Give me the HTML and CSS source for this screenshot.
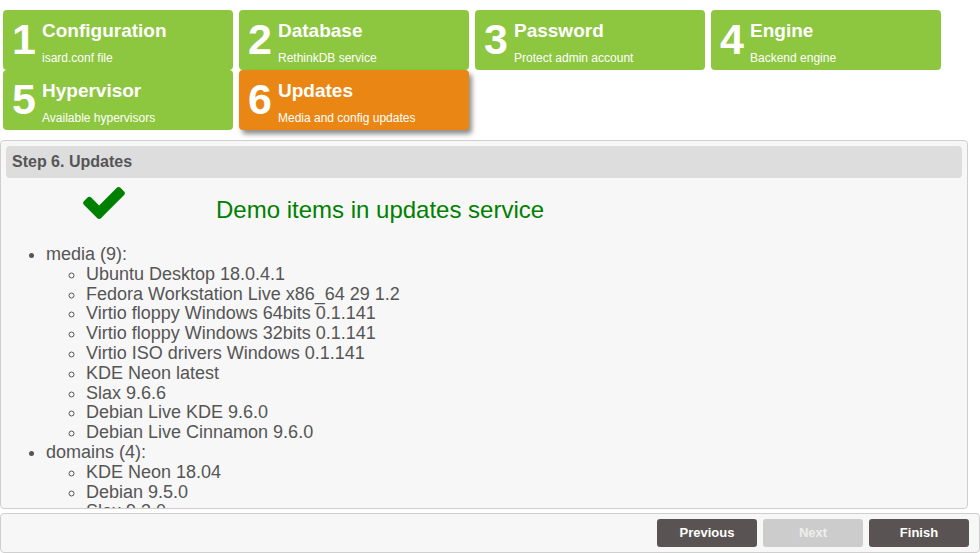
FILE: index.html
```html
<!DOCTYPE html>
<html>
<head>
<meta charset="utf-8">
<link rel="stylesheet" href="styles.css">
</head>
<body>
<div class="steps">
  <div class="step"><span class="num">1</span><div class="txt"><div class="title">Configuration</div><div class="sub">isard.conf file</div></div></div>
  <div class="step"><span class="num">2</span><div class="txt"><div class="title">Database</div><div class="sub">RethinkDB service</div></div></div>
  <div class="step"><span class="num">3</span><div class="txt"><div class="title">Password</div><div class="sub">Protect admin account</div></div></div>
  <div class="step"><span class="num">4</span><div class="txt"><div class="title">Engine</div><div class="sub">Backend engine</div></div></div>
  <div class="step"><span class="num">5</span><div class="txt"><div class="title">Hypervisor</div><div class="sub">Available hypervisors</div></div></div>
  <div class="step active"><span class="num">6</span><div class="txt"><div class="title">Updates</div><div class="sub">Media and config updates</div></div></div>
</div>

<div class="panel">
  <div class="panel-head">Step 6. Updates</div>
  <div class="result">
    <svg class="check" viewBox="121 334 1550 1188" width="42" height="32"><path fill="#008000" d="M1671 566q0 40-28 68l-724 724-136 136q-28 28-68 28t-68-28l-136-136-362-362q-28-28-28-68t28-68l136-136q28-28 68-28t68 28l294 295 656-657q28-28 68-28t68 28l136 136q28 28 28 68z"/></svg>
    <div class="msg">Demo items in updates service</div>
  </div>
  <ul class="items">
    <li>media (9):
      <ul>
        <li>Ubuntu Desktop 18.0.4.1</li>
        <li>Fedora Workstation Live x86_64 29 1.2</li>
        <li>Virtio floppy Windows 64bits 0.1.141</li>
        <li>Virtio floppy Windows 32bits 0.1.141</li>
        <li>Virtio ISO drivers Windows 0.1.141</li>
        <li>KDE Neon latest</li>
        <li>Slax 9.6.6</li>
        <li>Debian Live KDE 9.6.0</li>
        <li>Debian Live Cinnamon 9.6.0</li>
      </ul>
    </li>
    <li>domains (4):
      <ul>
        <li>KDE Neon 18.04</li>
        <li>Debian 9.5.0</li>
        <li>Slax 9.3.0</li>
        <li>Ubuntu 18.04</li>
      </ul>
    </li>
  </ul>
</div>

<div class="footer">
  <button class="btn">Previous</button>
  <button class="btn disabled">Next</button>
  <button class="btn">Finish</button>
</div>
</body>
</html>
```

FILE: styles.css
```css
html, body {
  margin: 0;
  padding: 0;
  background: #ffffff;
  font-family: "Liberation Sans", Arial, sans-serif;
  overflow: hidden;
}

.steps {
  display: grid;
  grid-template-columns: repeat(4, 230px);
  grid-auto-rows: 60px;
  column-gap: 6px;
  row-gap: 0;
  margin: 10px 0 0 3px;
}

.step {
  background: #8dc63f;
  border-radius: 4px;
  color: #ffffff;
  display: flex;
  align-items: flex-start;
  padding: 0 0 0 9px;
  box-sizing: border-box;
}

.step.active {
  background: #ea8714;
  box-shadow: 3px 4px 5px rgba(0, 0, 0, 0.45);
  position: relative;
}

.num {
  font-size: 43px;
  font-weight: bold;
  line-height: 43px;
  margin-top: 8px;
  width: 30px;
}

.txt {
  padding-top: 9px;
}

.title {
  font-size: 19px;
  font-weight: bold;
  line-height: 24px;
}

.sub {
  font-size: 12px;
  line-height: 14px;
  margin-top: 8px;
}

.panel {
  margin-top: 10px;
  width: 968px;
  height: 369px;
  box-sizing: border-box;
  border: 1px solid #cfcfcf;
  border-radius: 4px;
  background: #f7f7f7;
  padding: 5px;
  overflow: hidden;
}

.panel-head {
  background: #dddddd;
  border-radius: 4px;
  height: 32px;
  line-height: 32px;
  padding-left: 6px;
  font-size: 16px;
  font-weight: bold;
  color: #555555;
}

.result {
  display: flex;
  align-items: flex-start;
  padding-left: 77px;
  margin-top: 9px;
}

.check {
  display: block;
}

.msg {
  margin-left: 91px;
  margin-top: 9px;
  font-size: 24px;
  line-height: 28px;
  color: #008000;
}

.items {
  margin: 21px 0 0 0;
  padding-left: 40px;
  font-size: 18px;
  line-height: 19.8px;
  color: #555555;
}

.items ul {
  margin: 0;
  padding-left: 40px;
  list-style-type: circle;
}

.footer {
  margin-top: 4px;
  width: 980px;
  height: 40px;
  box-sizing: border-box;
  border: 1px solid #cfcfcf;
  border-radius: 4px;
  background: #f7f7f7;
  display: flex;
  justify-content: flex-end;
  align-items: center;
  gap: 6px;
  padding: 0 10px 1px 0;
}

.btn {
  width: 100px;
  height: 28px;
  border: none;
  border-radius: 3px;
  background: #595453;
  color: #ffffff;
  font-family: "Liberation Sans", Arial, sans-serif;
  font-size: 13px;
  font-weight: bold;
  padding: 0;
}

.btn.disabled {
  background: #cccccc;
  color: #eeeeee;
}
```
